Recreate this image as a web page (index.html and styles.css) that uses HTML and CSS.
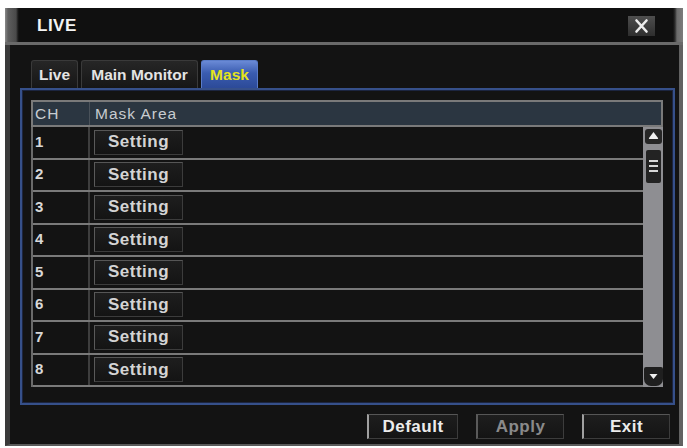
FILE: index.html
```html
<!DOCTYPE html>
<html>
<head>
<meta charset="utf-8">
<link rel="stylesheet" href="styles.css">
</head>
<body>
<div class="window">
  <div class="titlebar">
    <span class="title">LIVE</span>
    <span class="close">
      <svg width="27" height="20" viewBox="0 0 27 20"><path d="M8.5 4.5 L18.5 15.5 M18.5 4.5 L8.5 15.5" stroke="#ececec" stroke-width="2.6" stroke-linecap="round"/></svg>
    </span>
  </div>
  <div class="body">
    <div class="tabs">
      <div class="tab tab-live">Live</div>
      <div class="tab tab-main">Main Monitor</div>
      <div class="tab tab-mask active">Mask</div>
    </div>
    <div class="panel">
      <div class="grid">
        <div class="head">
          <div class="h-ch">CH</div>
          <div class="h-area">Mask Area</div>
        </div>
        <div class="rows-wrap">
          <div class="rows">
            <div class="row"><div class="ch">1</div><div class="area"><span class="btn setting">Setting</span></div></div>
            <div class="row"><div class="ch">2</div><div class="area"><span class="btn setting">Setting</span></div></div>
            <div class="row"><div class="ch">3</div><div class="area"><span class="btn setting">Setting</span></div></div>
            <div class="row"><div class="ch">4</div><div class="area"><span class="btn setting">Setting</span></div></div>
            <div class="row"><div class="ch">5</div><div class="area"><span class="btn setting">Setting</span></div></div>
            <div class="row"><div class="ch">6</div><div class="area"><span class="btn setting">Setting</span></div></div>
            <div class="row"><div class="ch">7</div><div class="area"><span class="btn setting">Setting</span></div></div>
            <div class="row"><div class="ch">8</div><div class="area"><span class="btn setting">Setting</span></div></div>
          </div>
          <div class="scrollbar">
            <div class="sb-up">
              <svg width="17" height="15" viewBox="0 0 17 15"><path d="M8.5 3 L13 9 Q13.5 10 12.5 10 L4.5 10 Q3.5 10 4 9 Z" fill="#f0f0f0"/></svg>
            </div>
            <div class="sb-thumb">
              <svg width="15" height="33" viewBox="0 0 15 33"><path d="M3 11 H12 M3 16 H12 M3 21 H12" stroke="#d8d8d8" stroke-width="2"/></svg>
            </div>
            <div class="sb-space"></div>
            <div class="sb-down">
              <svg width="19" height="19" viewBox="0 0 19 19"><path d="M9.5 12 L5.5 7 L13.5 7 Z" fill="#f0f0f0"/></svg>
            </div>
          </div>
        </div>
      </div>
    </div>
    <div class="actions">
      <span class="btn action btn-default">Default</span>
      <span class="btn action btn-apply">Apply</span>
      <span class="btn action btn-exit">Exit</span>
    </div>
  </div>
</div>
</body>
</html>
```

FILE: styles.css
```css
html, body {
  margin: 0;
  padding: 0;
  background: #ffffff;
}

body {
  font-family: "Liberation Sans", Arial, sans-serif;
  width: 687px;
  height: 448px;
  overflow: hidden;
}

.window {
  margin: 8px 0 0 5px;
  width: 678px;
  height: 438px;
  display: flex;
  flex-direction: column;
}

/* Title bar */
.titlebar {
  height: 37px;
  box-sizing: border-box;
  border-bottom: 3px solid #6a6a6a;
  background: linear-gradient(to right, #8a8a8a 0px, #5e5e5e 3px, #4a4a4a 11px, #1c1c1c 13px, #101010 14px, #101010 668px, #2e2e2e 670px, #6c6c6c 672px, #7c7c7c 678px);
  display: flex;
  align-items: center;
  justify-content: space-between;
  padding: 1px 28px 0 32px;
}

.title {
  color: #f4f4f4;
  font-weight: bold;
  font-size: 17px;
  letter-spacing: 0.5px;
}

.close {
  width: 27px;
  height: 20px;
  background: linear-gradient(#4e4e4e, #2e2e2e);
  display: flex;
}

/* Body */
.body {
  flex: 1;
  background: #131313;
  border-left: 5px solid #3a3a3a;
  border-right: 4px solid #626262;
  border-bottom: 2px solid #5a5a5a;
  display: flex;
  flex-direction: column;
}

.tabs {
  display: flex;
  gap: 2px;
  margin-top: 15px;
  padding-left: 21px;
  height: 28px;
}

.tab {
  box-sizing: border-box;
  height: 28px;
  border: 1px solid #3a3a3a;
  border-bottom: none;
  border-radius: 3px 3px 0 0;
  background: linear-gradient(#262626, #161616);
  color: #e4e4e4;
  font-weight: bold;
  font-size: 15.5px;
  line-height: 28px;
  text-align: center;
}

.tab-live { width: 47px; }
.tab-main { width: 117px; margin-left: 1px; }
.tab-mask { width: 57px; margin-left: 1px; }

.tab.active {
  background: linear-gradient(#6a8ad6, #3a5cb0 45%, #2c4a98);
  border-color: #5a7cc8;
  color: #e6e41c;
}

/* Panel */
.panel {
  margin-left: 10px;
  width: 655px;
  height: 317px;
  box-sizing: border-box;
  border: 2px solid #36508a;
  box-shadow: inset 0 0 0 1px #1c2540;
  padding: 10px 10px 16px 9px;
}

.grid {
  width: 632px;
  height: 287px;
  display: flex;
  flex-direction: column;
}

.head {
  height: 27px;
  box-sizing: border-box;
  border: 2px solid #7a7a7a;
  background: #2b3641;
  display: flex;
  align-items: center;
  color: #c8ccd0;
  font-size: 15.5px;
  letter-spacing: 1px;
}

.h-ch {
  width: 57px;
  box-sizing: border-box;
  padding-left: 2px;
  height: 100%;
  line-height: 23px;
  border-right: 1px solid #4a525a;
}

.h-area {
  padding-left: 5px;
  line-height: 23px;
}

.rows-wrap {
  flex: 1;
  display: flex;
}

.rows {
  width: 612px;
  border-left: 2px solid #6a6a6a;
  box-sizing: border-box;
  display: flex;
  flex-direction: column;
}

.row {
  height: 32.5px;
  box-sizing: border-box;
  border-bottom: 2px solid #7a7a7a;
  display: flex;
  align-items: stretch;
}

.ch {
  width: 57px;
  box-sizing: border-box;
  border-right: 2px solid #3e3e3e;
  padding-left: 2px;
  padding-bottom: 2px;
  color: #d8d8d8;
  font-weight: bold;
  font-size: 15px;
  display: flex;
  align-items: center;
}

.area {
  flex: 1;
  display: flex;
  align-items: center;
  padding-left: 4px;
}

.btn {
  box-sizing: border-box;
  display: flex;
  align-items: center;
  justify-content: center;
  background: linear-gradient(#1e1e1e, #141414);
  border: 1px solid #3c3c3c;
  border-top-color: #565656;
  color: #dcdcdc;
  font-weight: bold;
  font-size: 17px;
  letter-spacing: 0.5px;
}

.setting {
  width: 89px;
  height: 25px;
  border-left-color: #5a5a5a;
  color: #d4d4d4;
}

/* Scrollbar */
.scrollbar {
  width: 20px;
  background: #8e8e92;
  box-sizing: border-box;
  padding: 2px 1px 1px 2px;
  display: flex;
  flex-direction: column;
  align-items: center;
}

.sb-up {
  width: 17px;
  height: 15px;
  background: #262626;
  border-radius: 3px;
  display: flex;
}

.sb-thumb {
  margin-top: 6px;
  width: 15px;
  height: 33px;
  background: #232323;
  border-radius: 2px;
  display: flex;
}

.sb-space {
  flex: 1;
}

.sb-down {
  width: 19px;
  height: 19px;
  background: #1f1f1f;
  border-radius: 2px 2px 7px 7px;
  display: flex;
}

/* Action buttons */
.actions {
  margin-top: 9px;
  display: flex;
  justify-content: flex-end;
  gap: 18px;
  padding-right: 9px;
}

.action {
  height: 25px;
  width: 88px;
  border-left: 2px solid #a0a0a0;
  color: #ececec;
}

.btn-default {
  width: 91px;
}

.btn-apply {
  color: #8a8a8a;
  border-left-color: #5a5a5a;
}
```
